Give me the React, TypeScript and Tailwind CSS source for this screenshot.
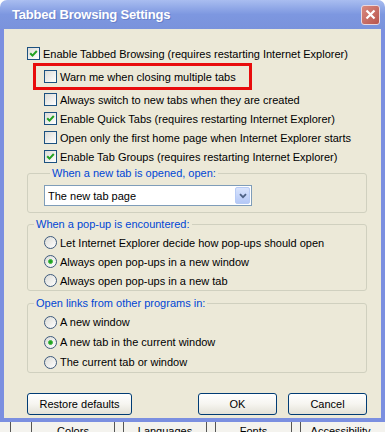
import React from "react";

function Check({ checked }: { checked: boolean }) {
  return (
    <span className="w-[13px] h-[13px] border border-[#1C5180] bg-linear-to-br from-[#DCDCD7] to-white flex items-center justify-center shrink-0">
      {checked && (
        <svg width="9" height="9" viewBox="0 0 9 9">
          <path d="M1.2 4.2 L3.5 6.6 L7.8 2" stroke="#21A121" strokeWidth="2" fill="none" />
        </svg>
      )}
    </span>
  );
}

function Radio({ checked }: { checked: boolean }) {
  return (
    <span className="w-[13px] h-[13px] rounded-full border border-[#3E5A7C] bg-linear-to-br from-[#DCDCD7] to-white flex items-center justify-center shrink-0">
      {checked && <span className="w-[5px] h-[5px] rounded-full bg-[#21A121] border border-[#3FB83F]" />}
    </span>
  );
}

function CheckRow({ checked, label, indent }: { checked: boolean; label: string; indent?: boolean }) {
  return (
    <div className={"h-[19px] flex items-center gap-[3px] " + (indent ? "pl-[17px]" : "")}>
      <Check checked={checked} />
      <span className="whitespace-nowrap">{label}</span>
    </div>
  );
}

function RadioRow({ checked, label }: { checked: boolean; label: string }) {
  return (
    <div className="h-[19px] flex items-center gap-[3px] pl-[16px]">
      <Radio checked={checked} />
      <span className="whitespace-nowrap">{label}</span>
    </div>
  );
}

function Btn({ label, w }: { label: string; w: string }) {
  return (
    <div
      className={
        "h-[22px] border border-[#003C74] rounded-[3px] bg-linear-to-b from-white via-[#F6F5F0] to-[#E3E1D7] flex items-center justify-center " +
        w
      }
    >
      {label}
    </div>
  );
}

export default function App() {
  return (
    <div className="w-[385px] h-[432px] flex flex-col overflow-hidden bg-white font-['Liberation_Sans',Arial,sans-serif] text-[11px] text-black leading-[14px]">
      {/* Title bar */}
      <div className="h-[29px] shrink-0 rounded-t-[7px] bg-linear-to-b from-[#A9BDF0] via-[#7D97E0] to-[#7A93DC] flex items-center justify-between pl-[12px] pr-[5px]">
        <span className="text-white font-bold text-[13px] font-['Liberation_Sans',Arial,sans-serif] tracking-[-0.2px] [text-shadow:1px_1px_0_#6880C8]">
          Tabbed Browsing Settings
        </span>
        <div className="w-[19px] h-[20px] rounded-[3px] border border-[#E8D8E0] bg-linear-to-br from-[#D98A80] to-[#B8544C] flex items-center justify-center">
          <svg width="11" height="11" viewBox="0 0 11 11">
            <path d="M1.5 1.5 L9.5 9.5 M9.5 1.5 L1.5 9.5" stroke="white" strokeWidth="2.2" />
          </svg>
        </div>
      </div>

      {/* Middle */}
      <div className="flex h-[389px] shrink-0">
        <div className="w-[4px] bg-[#7B8FE0]" />
        <div className="flex-1 bg-[#ECE9D8] pl-[23px] pr-[14px] pt-[15px] flex flex-col">
          <CheckRow checked label="Enable Tabbed Browsing (requires restarting Internet Explorer)" />
          <div className="ml-[6px] w-[219px] h-[27px] border-[3px] border-[#E80C0C] flex items-center pl-[8px]">
            <div className="flex items-center gap-[3px]">
              <Check checked={false} />
              <span className="whitespace-nowrap">Warn me when closing multiple tabs</span>
            </div>
          </div>
          <CheckRow indent checked={false} label="Always switch to new tabs when they are created" />
          <CheckRow indent checked label="Enable Quick Tabs (requires restarting Internet Explorer)" />
          <CheckRow indent checked={false} label="Open only the first home page when Internet Explorer starts" />
          <CheckRow indent checked label="Enable Tab Groups (requires restarting Internet Explorer)" />

          <fieldset className="border border-[#D0D0BF] rounded-[3px] pt-[5px] pb-[6px] pl-[16px]">
            <legend className="ml-[6px] px-[2px] text-[#0046D5]">When a new tab is opened, open:</legend>
            <div className="w-[208px] h-[21px] border border-[#7F9DB9] bg-white flex items-center justify-between pl-[3px] pr-[1px]">
              <span>The new tab page</span>
              <div className="w-[15px] h-[17px] rounded-[2px] border border-[#B7CBF5] bg-linear-to-b from-[#D9E4FD] to-[#B4C8F6] flex items-center justify-center">
                <svg width="8" height="6" viewBox="0 0 8 6">
                  <path d="M1 1.2 L4 4.2 L7 1.2" stroke="#4D6185" strokeWidth="1.8" fill="none" />
                </svg>
              </div>
            </div>
          </fieldset>

          <fieldset className="mt-[4px] border border-[#D0D0BF] rounded-[3px] pt-[2px] pb-0">
            <legend className="ml-[6px] px-[2px] text-[#0046D5]">When a pop-up is encountered:</legend>
            <RadioRow checked={false} label="Let Internet Explorer decide how pop-ups should open" />
            <RadioRow checked label="Always open pop-ups in a new window" />
            <RadioRow checked={false} label="Always open pop-ups in a new tab" />
          </fieldset>

          <fieldset className="mt-[5px] border border-[#D0D0BF] rounded-[3px] pt-[2px] pb-0">
            <legend className="ml-[6px] px-[2px] text-[#0046D5]">Open links from other programs in:</legend>
            <div className="h-[20px] flex items-center gap-[3px] pl-[16px]">
              <Radio checked={false} />
              <span>A new window</span>
            </div>
            <div className="h-[20px] flex items-center gap-[3px] pl-[16px]">
              <Radio checked />
              <span>A new tab in the current window</span>
            </div>
            <div className="h-[20px] flex items-center gap-[3px] pl-[16px]">
              <Radio checked={false} />
              <span>The current tab or window</span>
            </div>
          </fieldset>

          <div className="mt-[20px] flex items-center justify-between">
            <Btn label="Restore defaults" w="w-[105px]" />
            <div className="flex gap-[11px]">
              <Btn label="OK" w="w-[79px]" />
              <Btn label="Cancel" w="w-[79px]" />
            </div>
          </div>
        </div>
        <div className="w-[4px] bg-[#7B8FE0]" />
      </div>

      {/* Bottom border */}
      <div className="h-[4px] shrink-0 bg-[#7B8FE0]" />

      {/* Underlying window strip */}
      <div className="h-[10px] shrink-0 bg-[#F4F3EE] flex items-start">
        <div className="w-[10px]" />
        <div className="w-[22px] h-full border-l border-r border-[#555]" />
        <div className="w-[83px] h-full border-r border-[#555] text-center leading-[10px] pt-[4px]">Colors</div>
        <div className="w-[8px]" />
        <div className="w-[84px] h-full border-l border-r border-[#555] text-center leading-[10px] pt-[4px]">Languages</div>
        <div className="w-[8px]" />
        <div className="w-[77px] h-full border-l border-r border-[#555] text-center leading-[10px] pt-[4px]">Fonts</div>
        <div className="w-[8px]" />
        <div className="w-[80px] h-full border-l border-[#555] text-center leading-[10px] pt-[4px]">Accessibility</div>
      </div>
    </div>
  );
}
